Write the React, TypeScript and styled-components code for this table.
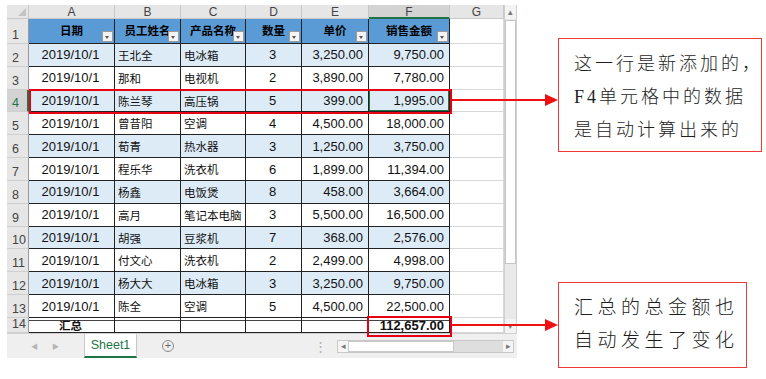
import { FC } from 'react'
import styled, { createGlobalStyle, css } from 'styled-components'

const GlobalStyle = createGlobalStyle`
  html, body {
    margin: 0;
    padding: 0;
    background: #ffffff;
  }
  body {
    font-family: "Liberation Sans", "Noto Sans CJK SC", sans-serif;
  }
`

const rows = [
  ['2019/10/1', '王北全', '电冰箱', '3', '3,250.00', '9,750.00'],
  ['2019/10/1', '那和', '电视机', '2', '3,890.00', '7,780.00'],
  ['2019/10/1', '陈兰琴', '高压锅', '5', '399.00', '1,995.00'],
  ['2019/10/1', '曾昔阳', '空调', '4', '4,500.00', '18,000.00'],
  ['2019/10/1', '荀青', '热水器', '3', '1,250.00', '3,750.00'],
  ['2019/10/1', '程乐华', '洗衣机', '6', '1,899.00', '11,394.00'],
  ['2019/10/1', '杨鑫', '电饭煲', '8', '458.00', '3,664.00'],
  ['2019/10/1', '高月', '笔记本电脑', '3', '5,500.00', '16,500.00'],
  ['2019/10/1', '胡强', '豆浆机', '7', '368.00', '2,576.00'],
  ['2019/10/1', '付文心', '洗衣机', '2', '2,499.00', '4,998.00'],
  ['2019/10/1', '杨大大', '电冰箱', '3', '3,250.00', '9,750.00'],
  ['2019/10/1', '陈全', '空调', '5', '4,500.00', '22,500.00'],
]

const headers = ['日期', '员工姓名', '产品名称', '数量', '单价', '销售金额']
const letters = ['A', 'B', 'C', 'D', 'E', 'F', 'G']
// alignment per column A..F
const aligns: Array<'center' | 'left' | 'right'> = ['center', 'left', 'left', 'center', 'right', 'right']

const App: FC = () => {
  return (
    <>
      <GlobalStyle />
      <Page>
        <Sheet>
          <SheetBody>
            <Grid>
              <Corner />
              {letters.map((l) => (
                <ColHead key={l} $sel={l === 'F'}>{l}</ColHead>
              ))}

              <RowHead>1</RowHead>
              {headers.map((h) => (
                <HeadCell key={h}>
                  <span>{h}</span>
                  <FilterBtn />
                </HeadCell>
              ))}
              <EmptyCell />

              {rows.map((r, i) => {
                const n = i + 2
                return [
                  <RowHead key={'h' + n} $sel={n === 4}>{n}</RowHead>,
                  ...r.map((v, c) => (
                    <DataCell
                      key={n + '-' + c}
                      $align={aligns[c]}
                      $band={n % 2 === 0}
                      $cjk={c === 1 || c === 2}
                      $active={n === 4 && c === 5}
                    >
                      {v}
                    </DataCell>
                  )),
                  <EmptyCell key={'g' + n} />,
                ]
              })}

              <RowHead>14</RowHead>
              <DataCell $align="center" $total $cjk $bold>汇总</DataCell>
              <DataCell $align="left" $total />
              <DataCell $align="left" $total />
              <DataCell $align="center" $total />
              <DataCell $align="right" $total />
              <DataCell $align="right" $total $bold>112,657.00</DataCell>
              <EmptyCell />

              {/* red marks drawn over the grid areas of row 4 and F14 */}
              <Highlight $row="5 / 6" $col="2 / 8" $inset="-1px -2px -2px 0" />
              <Highlight $row="15 / 16" $col="7 / 8" $inset="-2px -2px -4px -2px" />
            </Grid>
            <VScroll>
              <ScrollBtn>▴</ScrollBtn>
              <ScrollTrack>
                <ScrollThumb />
              </ScrollTrack>
              <ScrollBtn>▾</ScrollBtn>
            </VScroll>
          </SheetBody>
          <TabBar>
            <TabNav>
              <span>◀</span>
              <span>▶</span>
            </TabNav>
            <SheetTab>Sheet1</SheetTab>
            <AddTab>+</AddTab>
            <Dots>⋮</Dots>
            <HScroll>
              <HArrow>◂</HArrow>
              <HThumb />
              <HArrow>▸</HArrow>
            </HScroll>
          </TabBar>
        </Sheet>

        <Notes>
          <NoteBox $w={204} $h={114} $size={18} $spacing={3} $pt={9}>
            这一行是新添加的，
            <br />
            F4单元格中的数据
            <br />
            是自动计算出来的
          </NoteBox>
          <NoteBox $w={189} $h={86} $size={19} $spacing={4.5} $pt={8} $mt={130}>
            汇总的总金额也
            <br />
            自动发生了变化
          </NoteBox>
        </Notes>

        <Overlay width="766" height="379" viewBox="0 0 766 379">
          <line x1="452" y1="100" x2="548" y2="100" stroke="#ee1111" strokeWidth="2" />
          <polygon points="545,94 558,100 545,106" fill="#ee1111" />
          <line x1="452" y1="325" x2="548" y2="325" stroke="#ee1111" strokeWidth="2" />
          <polygon points="545,319 558,325 545,331" fill="#ee1111" />
        </Overlay>
      </Page>
    </>
  )
}

export default App

const Page = styled.div`
  position: relative;
  display: flex;
  width: 766px;
  height: 379px;
  box-sizing: border-box;
  padding: 5px 0 0 7px;
  overflow: hidden;
`

const Sheet = styled.div`
  display: flex;
  flex-direction: column;
  width: 510px;
  height: 353px;
`

const SheetBody = styled.div`
  display: flex;
  height: 328px;
`

const Grid = styled.div`
  position: relative;
  display: grid;
  grid-template-columns: 22px 86px 66px 65px 56px 67px 81px 54px;
  grid-template-rows: 14px 25px repeat(12, 22.833px) 15px;
  width: 497px;
`

const Corner = styled.div`
  background: #e6e6e6;
  border-right: 1px solid #c8c8c8;
  border-bottom: 1px solid #c8c8c8;
  box-sizing: border-box;
  position: relative;
  &::after {
    content: '';
    position: absolute;
    right: 2px;
    bottom: 2px;
    border-left: 8px solid transparent;
    border-bottom: 8px solid #c4c4c4;
  }
`

const ColHead = styled.div<{ $sel?: boolean }>`
  box-sizing: border-box;
  background: ${(p) => (p.$sel ? '#d3d3d3' : '#e6e6e6')};
  border-right: 1px solid #c8c8c8;
  border-bottom: ${(p) => (p.$sel ? '2px solid #217346' : '1px solid #c8c8c8')};
  color: #444;
  font-size: 12px;
  line-height: 14px;
  text-align: center;
`

const RowHead = styled.div<{ $sel?: boolean }>`
  box-sizing: border-box;
  display: flex;
  align-items: flex-end;
  padding: 0 0 1px 5px;
  background: ${(p) => (p.$sel ? '#d3d3d3' : '#e6e6e6')};
  border-bottom: 1px solid #cfcfcf;
  border-right: ${(p) => (p.$sel ? '2px solid #217346' : '1px solid #9a9a9a')};
  color: ${(p) => (p.$sel ? '#217346' : '#444')};
  font-size: 12.5px;
  line-height: 14px;
`

const HeadCell = styled.div`
  position: relative;
  box-sizing: border-box;
  display: flex;
  align-items: center;
  justify-content: center;
  background: #5b9bd5;
  border-right: 1px solid #222;
  border-bottom: 1px solid #222;
  font-family: "Liberation Sans", "Noto Sans CJK SC", sans-serif;
  font-size: 11.5px;
  font-weight: 700;
  color: #000;
  white-space: nowrap;
  overflow: hidden;
  span {
    margin-top: -2px;
  }
`

const FilterBtn = styled.div`
  position: absolute;
  right: 1px;
  bottom: 1px;
  width: 11px;
  height: 11px;
  box-sizing: border-box;
  background: #f4f4f4;
  border: 1px solid #9b9b9b;
  &::after {
    content: '';
    position: absolute;
    left: 2px;
    top: 4px;
    border-left: 2.5px solid transparent;
    border-right: 2.5px solid transparent;
    border-top: 3px solid #555;
  }
`

const DataCell = styled.div<{
  $align: 'center' | 'left' | 'right'
  $band?: boolean
  $cjk?: boolean
  $bold?: boolean
  $total?: boolean
  $active?: boolean
}>`
  position: relative;
  box-sizing: border-box;
  display: flex;
  align-items: center;
  justify-content: ${(p) => (p.$align === 'center' ? 'center' : p.$align === 'left' ? 'flex-start' : 'flex-end')};
  padding: 0 5px 0 3px;
  background: ${(p) => (p.$band ? '#ddebf7' : '#ffffff')};
  border-right: 1px solid #222;
  border-bottom: 1px solid #222;
  font-size: ${(p) => (p.$cjk ? '11.5px' : '13px')};
  font-weight: ${(p) => (p.$bold ? 700 : 400)};
  color: #111;
  white-space: nowrap;
  overflow: hidden;
  ${(p) =>
    p.$total &&
    css`
      box-shadow: inset 0 2px 0 #fff, inset 0 3px 0 #444;
      padding-top: 2px;
      line-height: 12px;
    `}
  ${(p) =>
    p.$active &&
    css`
      box-shadow: inset 0 0 0 1px #217346;
    `}
`

const EmptyCell = styled.div`
  box-sizing: border-box;
  background: #fff;
  border-right: 1px solid #d8d8d8;
  border-bottom: 1px solid #d8d8d8;
`

// absolutely positioned grid child: takes its grid area as containing block, no auto-placement
const Highlight = styled.div<{ $row: string; $col: string; $inset: string }>`
  position: absolute;
  grid-row: ${(p) => p.$row};
  grid-column: ${(p) => p.$col};
  inset: ${(p) => p.$inset};
  border: 2px solid #e60012;
  pointer-events: none;
  z-index: 2;
`

const VScroll = styled.div`
  display: flex;
  flex-direction: column;
  width: 13px;
  box-sizing: border-box;
  background: #e9e9e9;
  border-left: 1px solid #cfcfcf;
  border-right: 1px solid #cfcfcf;
`

const ScrollBtn = styled.div`
  height: 14px;
  font-size: 9px;
  line-height: 14px;
  text-align: center;
  color: #777;
  background: #f3f3f3;
`

const ScrollTrack = styled.div`
  flex: 1;
  padding: 1px 0;
`

const ScrollThumb = styled.div`
  height: 244px;
  box-sizing: border-box;
  background: #fff;
  border: 1px solid #c6c6c6;
`

const TabBar = styled.div`
  display: flex;
  align-items: center;
  height: 25px;
  background: #efefef;
  border-top: 1px solid #d0d0d0;
  box-sizing: border-box;
`

const TabNav = styled.div`
  display: flex;
  gap: 14px;
  width: 77px;
  padding-left: 24px;
  box-sizing: border-box;
  font-size: 7px;
  color: #b5b5b5;
`

const SheetTab = styled.div`
  width: 53px;
  height: 24px;
  box-sizing: border-box;
  background: #fff;
  border-left: 1px solid #c8c8c8;
  border-right: 1px solid #c8c8c8;
  border-bottom: 2px solid #217346;
  margin-top: -1px;
  color: #217346;
  font-size: 12.5px;
  line-height: 22px;
  text-align: center;
`

const AddTab = styled.div`
  width: 12px;
  height: 12px;
  margin-left: 25px;
  box-sizing: border-box;
  border: 1px solid #8a8a8a;
  border-radius: 50%;
  color: #666;
  font-size: 11px;
  line-height: 9px;
  text-align: center;
`

const Dots = styled.div`
  margin-left: 140px;
  color: #b0b0b0;
  font-size: 13px;
`

const HScroll = styled.div`
  display: flex;
  align-items: center;
  width: 177px;
  height: 13px;
  margin-left: 10px;
  box-sizing: border-box;
  background: #dedede;
  border: 1px solid #c8c8c8;
`

const HArrow = styled.div`
  width: 10px;
  height: 11px;
  background: #f5f5f5;
  color: #777;
  font-size: 9px;
  line-height: 11px;
  text-align: center;
  &:last-child {
    margin-left: auto;
  }
`

const HThumb = styled.div`
  width: 106px;
  height: 11px;
  background: #fff;
  box-sizing: border-box;
  border: 1px solid #c8c8c8;
`

const Notes = styled.div`
  display: flex;
  flex-direction: column;
  align-items: flex-start;
  padding-top: 33px;
  margin-left: 41px;
`

const NoteBox = styled.div<{ $w: number; $h: number; $size: number; $spacing: number; $pt: number; $mt?: number }>`
  width: ${(p) => p.$w}px;
  height: ${(p) => p.$h}px;
  margin-top: ${(p) => p.$mt || 0}px;
  box-sizing: border-box;
  padding: ${(p) => p.$pt}px 0 0 15px;
  border: 1.5px solid #f03a3a;
  font-family: "Liberation Serif", "Noto Sans CJK SC", serif;
  font-size: ${(p) => p.$size}px;
  letter-spacing: ${(p) => p.$spacing}px;
  line-height: 33px;
  color: #1e1e1e;
  font-weight: 300;
  white-space: nowrap;
`

const Overlay = styled.svg`
  position: absolute;
  left: 0;
  top: 0;
  pointer-events: none;
`
